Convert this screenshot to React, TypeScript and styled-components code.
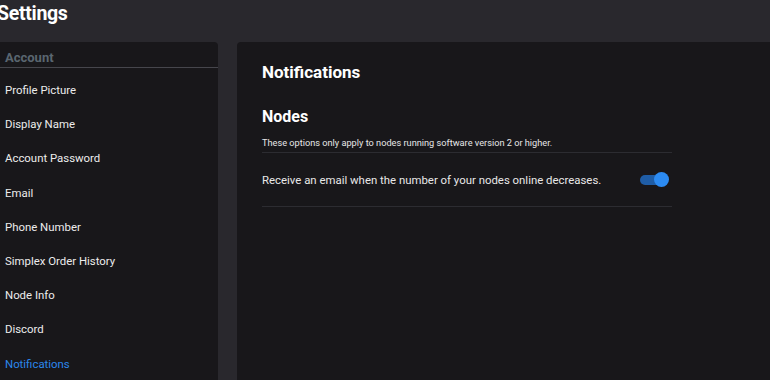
import styled, { createGlobalStyle } from 'styled-components';

const GlobalStyle = createGlobalStyle`
  html, body {
    margin: 0;
    padding: 0;
    background-color: #29282d;
    font-family: Roboto, 'Liberation Sans', sans-serif;
    overflow: hidden;
  }
`;

const menuItems = [
  'Profile Picture',
  'Display Name',
  'Account Password',
  'Email',
  'Phone Number',
  'Simplex Order History',
  'Node Info',
  'Discord',
  'Notifications',
];

export default function App() {
  return (
    <>
      <GlobalStyle />
      <Page>
        <TopBar>
          <PageTitle>Settings</PageTitle>
        </TopBar>
        <Body>
          <Sidebar>
            <SectionLabel>Account</SectionLabel>
            <Menu>
              {menuItems.map((item) => (
                <MenuItem key={item} $active={item === 'Notifications'}>
                  {item}
                </MenuItem>
              ))}
            </Menu>
          </Sidebar>
          <Main>
            <Content>
              <Heading>Notifications</Heading>
              <SubHeading>Nodes</SubHeading>
              <Note>These options only apply to nodes running software version 2 or higher.</Note>
              <OptionRow>
                <OptionText>Receive an email when the number of your nodes online decreases.</OptionText>
                <Toggle>
                  <Track />
                  <Knob />
                </Toggle>
              </OptionRow>
            </Content>
          </Main>
        </Body>
      </Page>
    </>
  );
}

const Page = styled.div`
  width: 770px;
  height: 380px;
  display: flex;
  flex-direction: column;
`;

const TopBar = styled.header`
  height: 42px;
  flex-shrink: 0;
  display: flex;
  align-items: flex-start;
`;

const PageTitle = styled.h1`
  margin: 2px 0 0 -3px;
  font-size: 19.5px;
  font-weight: 700;
  color: #ffffff;
  letter-spacing: -0.3px;
`;

const Body = styled.div`
  flex: 1;
  display: flex;
  gap: 19px;
`;

const Sidebar = styled.aside`
  width: 218px;
  background-color: #18171a;
  border-radius: 0 4px 0 0;
  display: flex;
  flex-direction: column;
`;

const SectionLabel = styled.div`
  height: 26px;
  box-sizing: border-box;
  padding: 6px 0 0 5px;
  display: flex;
  align-items: center;
  font-size: 13px;
  font-weight: 700;
  color: #5a6670;
  border-bottom: 1px solid #46464c;
`;

const Menu = styled.ul`
  list-style: none;
  margin: 0;
  padding: 5px 0 0;
`;

const MenuItem = styled.li<{ $active?: boolean }>`
  height: 34.2px;
  padding-left: 5px;
  display: flex;
  align-items: center;
  font-size: 11.4px;
  color: ${(p) => (p.$active ? '#2b87ec' : '#ececec')};
`;

const Main = styled.main`
  flex: 1;
  background-color: #18171a;
  border-radius: 4px 0 0 0;
  padding: 0 25px;
`;

const Content = styled.section`
  width: 410px;
`;

const Heading = styled.h2`
  margin: 20px 0 0;
  font-size: 17px;
  font-weight: 700;
  color: #ffffff;
`;

const SubHeading = styled.h3`
  margin: 25px 0 0;
  font-size: 16px;
  font-weight: 700;
  color: #ffffff;
`;

const Note = styled.p`
  margin: 11px 0 0;
  padding-bottom: 4px;
  font-size: 9.2px;
  color: #e6e6e6;
  border-bottom: 1px solid #2c2c31;
`;

const OptionRow = styled.div`
  height: 53px;
  display: flex;
  align-items: center;
  justify-content: space-between;
  border-bottom: 1px solid #2c2c31;
`;

const OptionText = styled.span`
  font-size: 11.4px;
  color: #e8e8e8;
`;

const Toggle = styled.div`
  position: relative;
  width: 29px;
  height: 16px;
  margin-right: 3px;
  display: flex;
  align-items: center;
`;

const Track = styled.div`
  width: 24px;
  height: 10px;
  border-radius: 5px;
  background-color: #1f5da6;
`;

const Knob = styled.div`
  position: absolute;
  right: 0;
  top: 0;
  width: 15px;
  height: 15px;
  border-radius: 50%;
  background-color: #2c8bf2;
`;
